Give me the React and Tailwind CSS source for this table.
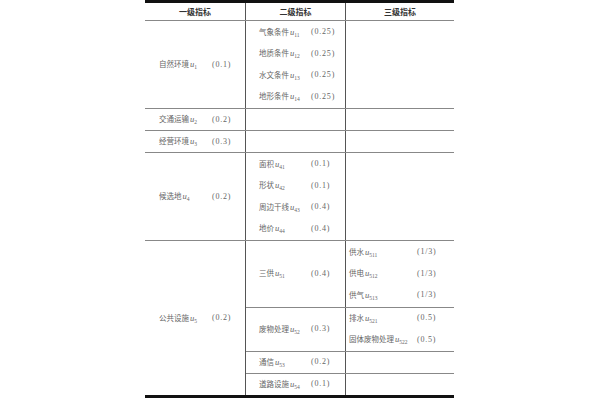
import React from 'react';

const rows1 = [
  ['气象条件', '11', '(0.25)'],
  ['地质条件', '12', '(0.25)'],
  ['水文条件', '13', '(0.25)'],
  ['地形条件', '14', '(0.25)'],
];

const rows4 = [
  ['面积', '41', '(0.1)'],
  ['形状', '42', '(0.1)'],
  ['周边干线', '43', '(0.4)'],
  ['地价', '44', '(0.4)'],
];

const Var = ({ name, sub }) => (
  <span className="whitespace-nowrap">
    {name}
    <i className="font-['Liberation_Serif'] text-[8.5px] ml-[1px]">u</i>
    <span className="relative top-[2px] text-[5.5px] font-['Liberation_Serif']">{sub}</span>
  </span>
);

const Item = ({ name, sub, value, labelW, pad }) => (
  <div className={`flex items-center h-[21.5px] ${pad}`}>
    <div className={labelW}><Var name={name} sub={sub} /></div>
    <div className="font-['Liberation_Serif'] text-[8px] tracking-[0.8px]">{value}</div>
  </div>
);

const Col1 = ({ name, sub, value }) => (
  <div className="w-[101px] border-r border-[#555] flex items-center pl-[14px]">
    <div className="w-[53px]"><Var name={name} sub={sub} /></div>
    <div className="font-['Liberation_Serif'] text-[8px] tracking-[0.8px]">{value}</div>
  </div>
);

const Col2 = ({ children, className = '' }) => (
  <div className={`w-[100px] border-r border-[#555] flex flex-col justify-center ${className}`}>{children}</div>
);

const L2 = (props) => <Item {...props} labelW="w-[52px]" pad="pl-[13px]" />;
const L3 = (props) => <Item {...props} labelW="w-[68px]" pad="pl-[3px]" />;

export default function App() {
  return (
    <div className="w-[600px] h-[400px] bg-white overflow-hidden text-[#666] text-[7.5px] font-['Liberation_Serif','Noto_Sans_CJK_SC',serif]">
      <div className="ml-[145px] w-[309px] border-t-[3px] border-b-[3px] border-[#111]">
        {/* header */}
        <div className="flex h-[18px] border-b border-[#888] font-['Noto_Sans_CJK_SC',sans-serif] font-bold text-[8px] text-[#333]">
          <div className="w-[101px] border-r border-[#555] flex items-center justify-center">一级指标</div>
          <div className="w-[100px] border-r border-[#555] flex items-center justify-center">二级指标</div>
          <div className="flex-1 flex items-center justify-center">三级指标</div>
        </div>

        <div className="flex h-[88px] border-b border-[#888]">
          <Col1 name="自然环境" sub="1" value="(0.1)" />
          <Col2>
            {rows1.map(([n, s, v]) => <L2 key={s} name={n} sub={s} value={v} />)}
          </Col2>
          <div className="flex-1" />
        </div>

        <div className="flex h-[22px] border-b border-[#888]">
          <Col1 name="交通运输" sub="2" value="(0.2)" />
          <Col2 />
          <div className="flex-1" />
        </div>

        <div className="flex h-[22px] border-b border-[#888]">
          <Col1 name="经营环境" sub="3" value="(0.3)" />
          <Col2 />
          <div className="flex-1" />
        </div>

        <div className="flex h-[88px] border-b border-[#888]">
          <Col1 name="候选地" sub="4" value="(0.2)" />
          <Col2>
            {rows4.map(([n, s, v]) => <L2 key={s} name={n} sub={s} value={v} />)}
          </Col2>
          <div className="flex-1" />
        </div>

        <div className="flex h-[154px]">
          <Col1 name="公共设施" sub="5" value="(0.2)" />
          <div className="flex-1 flex flex-col">
            <div className="flex h-[67px] border-b border-[#888]">
              <Col2><L2 name="三供" sub="51" value="(0.4)" /></Col2>
              <div className="flex-1 flex flex-col justify-center">
                <L3 name="供水" sub="511" value="(1/3)" />
                <L3 name="供电" sub="512" value="(1/3)" />
                <L3 name="供气" sub="513" value="(1/3)" />
              </div>
            </div>
            <div className="flex h-[44px] border-b border-[#888]">
              <Col2><L2 name="废物处理" sub="52" value="(0.3)" /></Col2>
              <div className="flex-1 flex flex-col justify-center">
                <L3 name="排水" sub="521" value="(0.5)" />
                <L3 name="固体废物处理" sub="522" value="(0.5)" />
              </div>
            </div>
            <div className="flex h-[22px] border-b border-[#888]">
              <Col2><L2 name="通信" sub="53" value="(0.2)" /></Col2>
              <div className="flex-1" />
            </div>
            <div className="flex flex-1">
              <Col2><L2 name="道路设施" sub="54" value="(0.1)" /></Col2>
              <div className="flex-1" />
            </div>
          </div>
        </div>
      </div>
    </div>
  );
}
